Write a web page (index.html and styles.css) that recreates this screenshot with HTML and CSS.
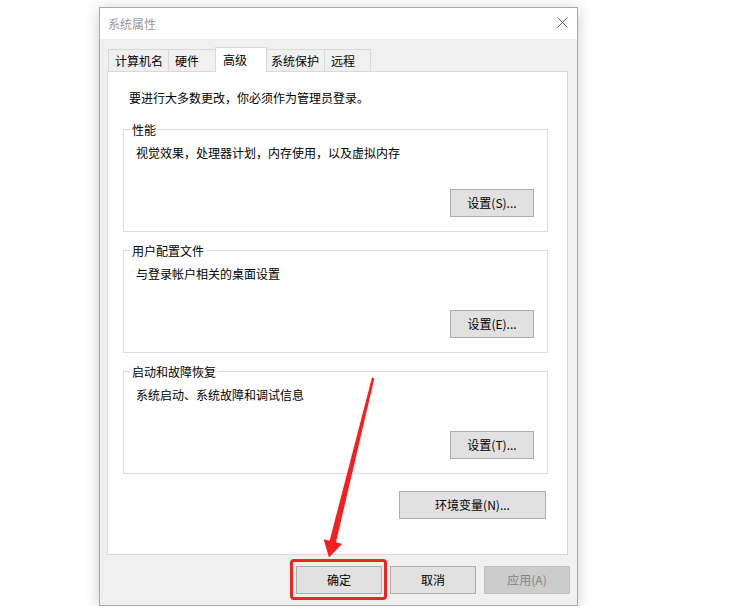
FILE: index.html
```html
<!DOCTYPE html>
<html lang="zh-CN">
<head>
<meta charset="utf-8">
<title>系统属性</title>
<link rel="stylesheet" href="styles.css">
</head>
<body>
<div class="window">
  <div class="titlebar">
    <span class="title">系统属性</span>
    <svg class="close" width="11" height="11" viewBox="0 0 11 11"><path d="M0.5 0.5L10.5 10.5M10.5 0.5L0.5 10.5" stroke="#6f6f6f" stroke-width="1" fill="none"/></svg>
  </div>
  <div class="body">
    <div class="tabs">
      <div class="tab tab-w1">计算机名</div>
      <div class="tab tab-w2">硬件</div>
      <div class="tab tab-w3 active">高级</div>
      <div class="tab tab-w4">系统保护</div>
      <div class="tab tab-w5">远程</div>
    </div>
    <div class="panel">
      <p class="intro">要进行大多数更改，你必须作为管理员登录。</p>
      <fieldset class="group">
        <legend>性能</legend>
        <p class="desc">视觉效果，处理器计划，内存使用，以及虚拟内存</p>
        <div class="btnrow"><button class="btn btn-set">设置(S)...</button></div>
      </fieldset>
      <fieldset class="group">
        <legend>用户配置文件</legend>
        <p class="desc">与登录帐户相关的桌面设置</p>
        <div class="btnrow"><button class="btn btn-set">设置(E)...</button></div>
      </fieldset>
      <fieldset class="group">
        <legend>启动和故障恢复</legend>
        <p class="desc">系统启动、系统故障和调试信息</p>
        <div class="btnrow"><button class="btn btn-set">设置(T)...</button></div>
      </fieldset>
      <div class="envrow"><button class="btn btn-env">环境变量(N)...</button></div>
    </div>
    <div class="footer">
      <button class="btn btn-dlg">确定</button>
      <button class="btn btn-dlg">取消</button>
      <button class="btn btn-dlg disabled">应用(A)</button>
    </div>
  </div>
</div>
<div class="highlight"></div>
<svg class="arrow" width="732" height="609" viewBox="0 0 732 609">
  <polygon points="372,377.6 374.4,378.2 336,542.2 342,544 329,557.5 323.6,539.2 329.6,540.8" fill="#f61e1e"/>
</svg>
</body>
</html>
```

FILE: styles.css
```css
* { box-sizing: border-box; }

body {
  margin: 0;
  background: #ffffff;
  font-family: "Noto Sans CJK SC", "Microsoft YaHei", sans-serif;
  font-size: 12px;
  line-height: 16px;
  color: #000;
}

.window {
  width: 479px;
  height: 599px;
  margin: 7px 0 0 99px;
  border: 1px solid #a9a9a9;
  background: #f0f0f0;
  box-shadow: 0 2px 14px rgba(0, 0, 0, 0.2);
  display: flex;
  flex-direction: column;
}

.titlebar {
  flex: none;
  height: 31px;
  background: #ffffff;
  display: flex;
  align-items: center;
  justify-content: space-between;
  padding: 0 9px 0 8px;
}

.title { color: #9a9a9a; }

.close { display: block; margin-top: -2px; }

.body {
  flex: 1;
  display: flex;
  flex-direction: column;
  padding: 8px 9px 0 7px;
}

.tabs {
  flex: none;
  display: flex;
  align-items: flex-end;
  height: 25px;
  margin-bottom: -1px;
  padding-left: 1px;
}

.tab {
  height: 22px;
  margin-bottom: 1px;
  border: 1px solid #d9d9d9;
  border-bottom: none;
  background: #f0f0f0;
  padding: 3px 0 0 6px;
  white-space: nowrap;
}

.tab + .tab { margin-left: -1px; }

.tab-w1 { width: 61px; }
.tab-w2 { width: 48px; }
.tab-w3 { width: 52px; }
.tab-w4 { width: 59px; padding-left: 4px; }
.tab-w5 { width: 47px; }

.tab.active {
  height: 25px;
  margin-bottom: 0;
  background: #ffffff;
  padding-top: 4px;
  padding-left: 7px;
  z-index: 1;
}

.panel {
  flex: none;
  height: 484px;
  background: #ffffff;
  border: 1px solid #d9d9d9;
  padding: 18px 19px 0 15px;
}

.intro {
  margin: 0 0 0 6px;
}

.group {
  margin: 15px 0 0 0;
  border: 1px solid #dcdcdc;
  padding: 0 13px 14px 6px;
  min-width: 0;
}

.group + .group { margin-top: 10px; }

.group legend {
  padding: 0 2px;
  line-height: 17px;
}

.desc {
  margin: 7px 0 0 6px;
}

.btnrow {
  display: flex;
  justify-content: flex-end;
  margin-top: 28px;
}

.btn {
  font: inherit;
  color: #000;
  height: 28px;
  background: #e1e1e1;
  border: 1px solid #adadad;
  padding: 0;
  margin: 0;
  text-align: center;
}

.btn-set { width: 84px; }

.envrow {
  display: flex;
  justify-content: flex-end;
  margin-top: 17px;
  padding-right: 2px;
}

.btn-env { width: 147px; }

.footer {
  flex: none;
  display: flex;
  justify-content: flex-end;
  gap: 8px;
  margin: 11px -2px 0 0;
}

.btn-dlg { width: 86px; }

.btn-dlg.disabled {
  background: #cccccc;
  border-color: #bfbfbf;
  color: #838383;
}

.highlight {
  position: absolute;
  left: 290px;
  top: 559px;
  width: 97px;
  height: 41px;
  border: 3px solid #f52222;
  border-radius: 4px;
}

.arrow {
  position: absolute;
  left: 0;
  top: 0;
  pointer-events: none;
}
```
